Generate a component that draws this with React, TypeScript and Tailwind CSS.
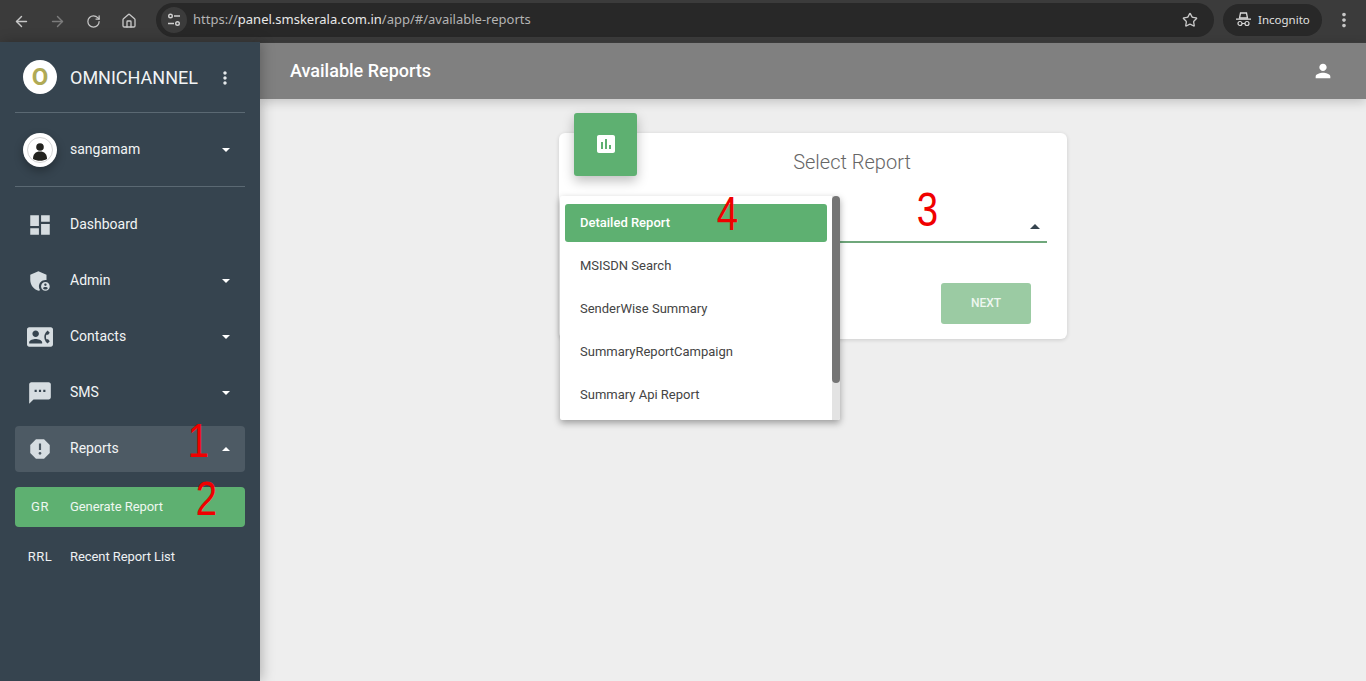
import React from "react";
import { ArrowLeft, ArrowRight, RotateCw, Home, Star } from "lucide-react";
import {
  MdDashboard,
  MdAdminPanelSettings,
  MdContactPhone,
  MdSms,
  MdReport,
  MdAssessment,
  MdPerson,
  MdMoreVert,
} from "react-icons/md";

function Caret({ up = false }: { up?: boolean }) {
  return (
    <span
      className={`ml-auto mr-[15px] block w-0 h-0 border-x-[4px] border-x-transparent ${
        up ? "border-b-[4px] border-b-white" : "border-t-[4px] border-t-white"
      }`}
    />
  );
}

function BrowserBar() {
  return (
    <div className="h-[42px] shrink-0 bg-[#3b3b3b] flex items-center pl-[13px] font-['Noto_Sans',sans-serif]">
      <ArrowLeft size={17} strokeWidth={2} className="text-[#c7c7c7]" />
      <ArrowRight size={17} strokeWidth={2} className="text-[#7c7c7c] ml-[19px]" />
      <RotateCw size={15} strokeWidth={2} className="text-[#c7c7c7] ml-[20px]" />
      <Home size={16} strokeWidth={2} className="text-[#c7c7c7] ml-[20px]" />
      <div className="ml-[19px] w-[1058px] h-[34px] -mt-[3px] rounded-full bg-[#282828] flex items-center pl-[5px] pr-[16px]">
        <div className="w-[26px] h-[26px] rounded-full bg-[#3b3b3b] flex items-center justify-center">
          <svg width="16" height="16" viewBox="0 0 16 16" fill="none" stroke="#d0d0d0" strokeWidth="1.4">
            <circle cx="4.5" cy="4" r="1.8" />
            <path d="M8 4h6M2 11.5h6" />
            <circle cx="11.5" cy="11.5" r="1.8" />
          </svg>
        </div>
        <span className="ml-[6px] text-[13px] text-[#b4b4b4]">
          https://<span className="text-[#e8e8e8]">panel.smskerala.com.in</span>/app/#/available-reports
        </span>
        <Star size={16} strokeWidth={2} className="ml-auto text-[#c7c7c7]" />
      </div>
      <div className="ml-[9px] w-[99px] h-[32px] -mt-[3px] rounded-full bg-[#282828] flex items-center pl-[13px]">
        <svg width="15" height="15" viewBox="0 0 15 15" fill="#d8d8d8">
          <path d="M4.500 1h6l1 5h-8z" fill="none" stroke="#d8d8d8" strokeWidth="1.3" />
          <path d="M0 6.500h15v1.300H0z" />
          <circle cx="4" cy="11.500" r="2" fill="none" stroke="#d8d8d8" strokeWidth="1.200" />
          <circle cx="11" cy="11.500" r="2" fill="none" stroke="#d8d8d8" strokeWidth="1.200" />
          <path d="M6 11h3v1H6z" />
        </svg>
        <span className="ml-[7px] text-[11.5px] text-[#e0e0e0]">Incognito</span>
      </div>
      <MdMoreVert size={22} className="ml-[11px] -mt-[3px] text-[#c7c7c7]" />
    </div>
  );
}

const navItems = [
  { label: "Dashboard", icon: MdDashboard, caret: false },
  { label: "Admin", icon: MdAdminPanelSettings, caret: true },
  { label: "Contacts", icon: MdContactPhone, caret: true },
  { label: "SMS", icon: MdSms, caret: true },
];

function Sidebar() {
  return (
    <aside className="relative z-20 w-[260px] shrink-0 bg-[#36444f] text-white shadow-[2px_0_12px_rgba(0,0,0,0.25)]">
      <div className="mx-[15px] h-[71px] border-b border-[#5b6973] flex items-center pl-[8px]">
        <div className="w-[34px] h-[34px] rounded-full bg-white flex items-center justify-center text-[24px] font-bold text-[#b0aa55]">
          O
        </div>
        <span className="ml-[13px] text-[18px] text-[#f2f4f5]">OMNICHANNEL</span>
        <MdMoreVert size={20} className="ml-[17px] mt-[2px] text-[#e4e8ea]" />
      </div>
      <div className="mx-[15px] h-[74px] border-b border-[#5b6973] flex items-center pl-[8px]">
        <div className="w-[34px] h-[34px] rounded-full bg-white flex items-center justify-center shadow-[0_4px_10px_rgba(0,0,0,0.3)]">
          <svg width="28" height="28" viewBox="0 0 28 28">
            <circle cx="14" cy="14" r="12.500" fill="#fff" stroke="#c9c9c9" strokeWidth="0.8" />
            <circle cx="14" cy="11" r="3.800" fill="#23231f" />
            <path d="M7 23c0-5 2.500-7.500 7-7.500s7 2.500 7 7.500c-2 1.200-4.500 1.800-7 1.800s-5-.6-7-1.800z" fill="#23231f" />
          </svg>
        </div>
        <span className="ml-[13px] text-[14px] -mt-[1px] text-[#f2f4f5]">sangamam</span>
        <Caret />
      </div>
      <nav className="mt-[15px] flex flex-col gap-[10px] mx-[15px]">
        {navItems.map(({ label, icon: Icon, caret }) => (
          <div key={label} className="h-[46px] flex items-center rounded-[4px]">
            <span className="w-[50px] flex justify-center">
              <Icon size={26} className="text-[#d6dde1]" />
            </span>
            <span className="ml-[5px] -mt-[2px] text-[14px] text-[#f2f4f5]">{label}</span>
            {caret && <Caret />}
          </div>
        ))}
        <div className="h-[46px] flex items-center rounded-[4px] bg-[#4d5a64]">
          <span className="w-[50px] flex justify-center">
            <MdReport size={26} className="text-[#d6dde1]" />
          </span>
          <span className="ml-[5px] -mt-[2px] text-[14px] text-[#f2f4f5]">Reports</span>
          <Caret up />
        </div>
        <div className="mt-[5px] h-[40px] flex items-center rounded-[4px] bg-[#5eb071] text-[#eef7f0]">
          <span className="w-[50px] text-center text-[13px] tracking-[0.5px]">GR</span>
          <span className="ml-[5px] text-[13px] tracking-[-0.07px]">Generate Report</span>
        </div>
        <div className="h-[40px] flex items-center text-[#eef1f3]">
          <span className="w-[50px] text-center text-[13px] tracking-[0.5px]">RRL</span>
          <span className="ml-[5px] text-[13px] tracking-[-0.07px]">Recent Report List</span>
        </div>
      </nav>
    </aside>
  );
}

function ReportDropdown() {
  const items = ["MSISDN Search", "SenderWise Summary", "SummaryReportCampaign", "Summary Api Report"];
  return (
    <div className="absolute left-[1px] top-[63px] z-10 w-[280px] h-[224px] bg-white rounded-[2px] shadow-[0_3px_7px_rgba(0,0,0,0.35)] flex overflow-hidden">
      <div className="flex-1 pt-[8px] pl-[5px] pr-[5px]">
        <div className="h-[38px] flex items-center pl-[15px] rounded-[3px] bg-[#5eb071] text-white text-[13px] font-medium">
          Detailed Report
        </div>
        {items.map((item) => (
          <div key={item} className="h-[43px] flex items-center pl-[15px] pt-[5px] text-[13px] text-[#444]">
            {item}
          </div>
        ))}
      </div>
      <div className="w-[8px] bg-[#e3e3e3]">
        <div className="h-[187px] bg-[#757575] rounded-full" />
      </div>
    </div>
  );
}

function Main() {
  return (
    <div className="flex-1 flex flex-col">
      <header className="relative z-10 h-[57px] shrink-0 bg-[#808080] border-t border-[#3b3b3b] flex items-center pl-[30px] pr-[32px] shadow-[0_3px_10px_rgba(0,0,0,0.18)]">
        <h1 className="-mt-[2px] text-[18px] font-medium text-white">Available Reports</h1>
        <MdPerson size={22} className="ml-auto text-white" />
      </header>
      <main className="flex-1 bg-[#eeeeee] flex justify-center pt-[34px]">
        <div className="relative w-[508px] h-[206px] bg-white rounded-[6px] shadow-[0_1px_4px_rgba(0,0,0,0.14)]">
          <div className="absolute left-[15px] -top-[20px] z-20 w-[63px] h-[63px] rounded-[3px] bg-[#5eb071] flex items-center justify-center shadow-[0_5px_12px_rgba(0,0,0,0.25)]">
            <MdAssessment size={24} className="text-white -mt-[1px]" />
          </div>
          <h2 className="pt-[15px] pl-[78px] text-center text-[20px] leading-[28px] font-light text-[#666]">
            Select Report
          </h2>
          <div className="relative mx-[20px] mt-[40px] h-[27px] border-b-2 border-[#6fa77b]">
            <span className="absolute right-[7px] top-[8px] w-0 h-0 border-x-[5px] border-x-transparent border-b-[5px] border-b-[#36444f]" />
          </div>
          <div className="flex justify-end pr-[36px] mt-[40px]">
            <button className="w-[90px] h-[41px] pb-[2px] rounded-[3px] bg-[#9bcba3] text-[12px] font-medium text-[#eef7f0]">
              NEXT
            </button>
          </div>
          <ReportDropdown />
        </div>
      </main>
    </div>
  );
}

const marks = [
  { n: "1", cls: "left-[185px] top-[413px]" },
  { n: "2", cls: "left-[193px] top-[471px]" },
  { n: "3", cls: "left-[914px] top-[182px]" },
  { n: "4", cls: "left-[714px] top-[186px]" },
];

export default function App() {
  return (
    <div className="relative w-[1366px] h-[681px] overflow-hidden flex flex-col font-['Roboto',sans-serif]">
      <BrowserBar />
      <div className="flex-1 flex">
        <Sidebar />
        <Main />
      </div>
      {/* red annotation numbers drawn over the screenshot */}
      {marks.map((m) => (
        <span
          key={m.n}
          className={`absolute z-30 ${m.cls} text-[48px] leading-[56px] text-[#f00000] font-['Liberation_Sans',sans-serif] scale-x-[0.8]`}
        >
          {m.n}
        </span>
      ))}
    </div>
  );
}
